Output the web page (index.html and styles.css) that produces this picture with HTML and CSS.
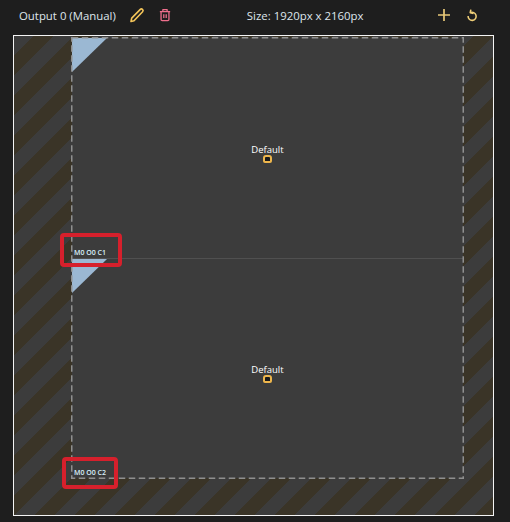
FILE: index.html
```html
<!DOCTYPE html>
<html lang="en">
<head>
    <meta charset="UTF-8">
    <title>Output Layout</title>
    <link rel="stylesheet" href="styles.css">
</head>
<body>
    <!-- Toolbar -->
    <div class="toolbar">
        <span class="output-name">Output 0 (Manual)</span>
        <svg class="icon icon-edit" width="16" height="16" viewBox="0 0 16 16" fill="none" stroke="#f5c65a" stroke-width="1.6" stroke-linejoin="round">
            <path d="M2 14.5l.7-3.4L11.3 2.4a1.5 1.5 0 0 1 2.1 0l.2.2a1.5 1.5 0 0 1 0 2.1L5 13.8z"/>
        </svg>
        <svg class="icon icon-delete" width="12" height="14" viewBox="0 0 14 15" fill="none" stroke="#ee6f8c" stroke-width="1.5" stroke-linejoin="round">
            <path d="M1 3.5h12M4.5 3.5V1.2h5v2.3M2.4 3.5v9.2q0 1.3 1.3 1.3h6.6q1.3 0 1.3-1.3V3.5M5.6 6.5v4.5M8.4 6.5v4.5"/>
        </svg>
        <span class="output-size">Size: 1920px x 2160px</span>
        <svg class="icon icon-add" width="14" height="14" viewBox="0 0 14 14" fill="none" stroke="#e8c878" stroke-width="1.7">
            <path d="M7 1v12M1 7h12"/>
        </svg>
        <svg class="icon icon-reset" width="11" height="13" viewBox="0 0 12 14" fill="none" stroke="#f0cf78" stroke-width="1.7" stroke-linejoin="round">
            <path d="M3.6 4a4.4 4.4 0 1 1-2.4 3.6M4.2 .6l-.7 3.4 3.5.7"/>
        </svg>
    </div>

    <!-- Canvas -->
    <div class="canvas">
        <div class="output-area">
            <div class="monitor monitor-first">
                <div class="corner"></div>
                <div class="workspace">
                    <span>Default</span>
                    <i class="marker"></i>
                </div>
                <span class="monitor-label">M0 O0 C1</span>
            </div>
            <div class="monitor monitor-second">
                <div class="corner"></div>
                <div class="workspace">
                    <span>Default</span>
                    <i class="marker"></i>
                </div>
                <span class="monitor-label">M0 O0 C2</span>
            </div>
            <svg class="output-outline" width="393" height="442">
                <rect x="0.75" y="0.75" width="391.5" height="440.5" fill="none" stroke="#8f8f8f" stroke-width="1.5" stroke-dasharray="6.5 3.5"/>
            </svg>
        </div>
        <div class="callout callout-top"></div>
        <div class="callout callout-bottom"></div>
    </div>
</body>
</html>
```
FILE: styles.css
```css
html, body {
    margin: 0;
    height: 100%;
}
body {
    background-color: #1e1e1e;
    font-family: "Open Sans", "Noto Sans", sans-serif;
    color: #dfe6ec;
    overflow: hidden;
}
.toolbar {
    display: flex;
    align-items: center;
    height: 30px;
    padding: 0 32px 0 19px;
    font-size: 11.4px;
}
.icon-edit {
    margin-left: 13px;
}
.icon-delete {
    margin-left: 14px;
}
.output-size {
    margin-left: 76px;
}
.icon-add {
    margin-left: auto;
}
.icon-reset {
    margin-left: 16px;
}
.canvas {
    position: relative;
    box-sizing: border-box;
    width: 481px;
    height: 481px;
    margin: 5px 0 0 13px;
    border: 1px solid #f4f4f4;
    background: repeating-linear-gradient(135deg, #3c3c3c 0, #3c3c3c 14.14px, #3a3427 14.14px, #3a3427 28.28px);
}
.output-area {
    position: absolute;
    left: 57px;
    top: 1px;
    box-sizing: border-box;
    width: 393px;
    height: 442px;
    padding: 1px;
    display: flex;
    flex-direction: column;
}
.output-outline {
    position: absolute;
    left: 0;
    top: 0;
}
.monitor {
    position: relative;
    background-color: #3c3c3c;
}
.monitor-first {
    height: 220px;
}
.monitor-second {
    flex: 1;
    border-top: 1px solid #505050;
}
.corner {
    width: 35px;
    height: 34px;
    background-color: #9bb8d3;
    clip-path: polygon(0 0, 100% 0, 0 100%);
}
.workspace {
    position: absolute;
    left: 0;
    right: 0;
    top: 106px;
    display: flex;
    flex-direction: column;
    align-items: center;
    font-size: 9.5px;
    font-weight: 500;
    line-height: 11px;
    color: #fff;
}
.monitor-second .workspace {
    top: 105px;
}
.marker {
    box-sizing: border-box;
    width: 9px;
    height: 8px;
    border: 2px solid #eeb64c;
    border-radius: 3px 3px 2px 2px;
    background-color: #1a1a1a;
}
.monitor-label {
    position: absolute;
    left: 2px;
    bottom: 1px;
    font-size: 7px;
    font-weight: 600;
    line-height: 9px;
    color: #d8f0fb;
}
.callout {
    position: absolute;
    box-sizing: border-box;
    border: 4px solid #d6202c;
    border-radius: 4px;
}
.callout-top {
    left: 46px;
    top: 197px;
    width: 62px;
    height: 34px;
}
.callout-bottom {
    left: 48px;
    top: 421px;
    width: 56px;
    height: 32px;
}
```
